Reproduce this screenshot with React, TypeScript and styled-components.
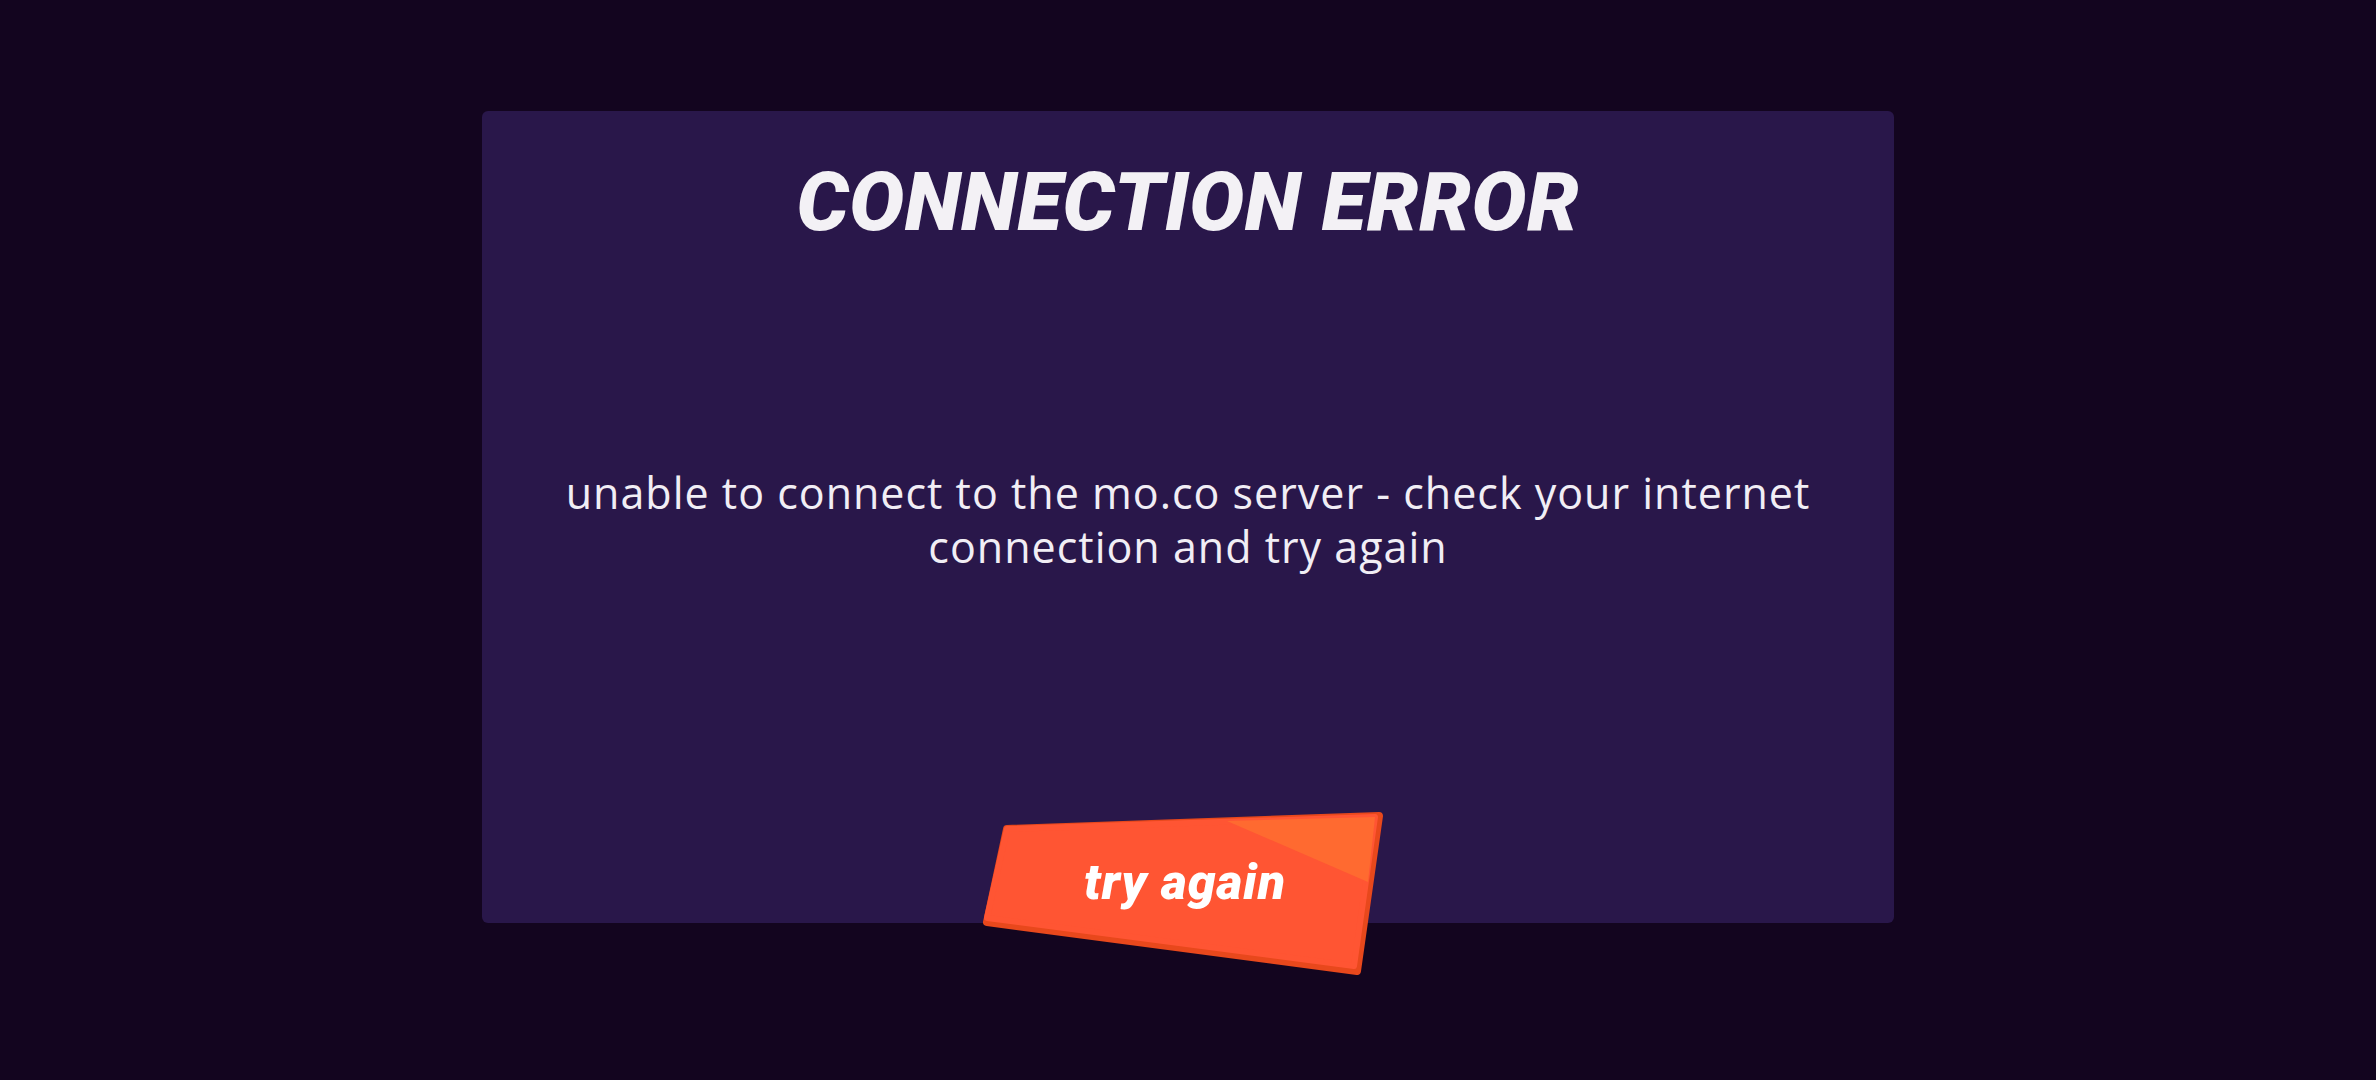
import React from "react";
import styled, { createGlobalStyle } from "styled-components";

const GlobalStyle = createGlobalStyle`
  html, body {
    margin: 0;
    padding: 0;
    background: #13051f;
  }
  * { box-sizing: border-box; }
`;

const Page = styled.main`
  min-height: 100vh;
  display: flex;
  justify-content: center;
  align-items: flex-start;
  padding-top: 111px;
  font-family: "Roboto", "Open Sans", sans-serif;
`;

const Card = styled.section`
  width: 1412px;
  height: 812px;
  background: #29174a;
  border-radius: 6px;
  display: flex;
  flex-direction: column;
  align-items: center;
`;

const Title = styled.h1`
  margin: 50px 0 0;
  font-family: "Roboto", sans-serif;
  font-weight: 900;
  font-style: italic;
  font-size: 82px;
  line-height: 1;
  letter-spacing: 0.5px;
  color: #f3f1f5;
`;

const Message = styled.p`
  flex: 1;
  margin: 0;
  padding-bottom: 20px;
  display: flex;
  align-items: center;
  justify-content: center;
  text-align: center;
  max-width: 1320px;
  font-family: "Open Sans", sans-serif;
  font-weight: 400;
  font-size: 43px;
  line-height: 54px;
  letter-spacing: 1px;
  color: #f1eef5;
`;

const RetryButton = styled.button`
  position: relative;
  width: 392px;
  height: 155px;
  margin: 0 0 -48px -10px;
  padding: 0;
  border: none;
  background: none;
  cursor: pointer;
  display: flex;
  align-items: center;
  justify-content: center;
`;

const ButtonShape = styled.svg`
  position: absolute;
  inset: 0;
  width: 100%;
  height: 100%;
  overflow: visible;
`;

const ButtonLabel = styled.span`
  position: relative;
  margin: -24px 0 0 4px;
  font-family: "Roboto", sans-serif;
  font-weight: 900;
  font-style: italic;
  font-size: 50px;
  letter-spacing: 1px;
  color: #ffffff;
`;

export default function App() {
  return (
    <>
      <GlobalStyle />
      <Page>
        <Card>
          <Title>CONNECTION ERROR</Title>
          <Message>
            unable to connect to the mo.co server - check your internet connection and try again
          </Message>
          <RetryButton type="button">
            <ButtonShape viewBox="0 0 392 155" aria-hidden="true">
              <polygon
                points="20,13 392,0 370,155 0,106"
                fill="#e8481c"
                stroke="#e8481c"
                strokeWidth="8"
                strokeLinejoin="round"
              />
              <polygon
                points="20,13 388,1 367,150 0,102"
                fill="#ff5533"
                stroke="#ff5533"
                strokeWidth="6"
                strokeLinejoin="round"
              />
              <polygon points="240,5 388,1 381,66" fill="#ff6a30" />
            </ButtonShape>
            <ButtonLabel>try again</ButtonLabel>
          </RetryButton>
        </Card>
      </Page>
    </>
  );
}
